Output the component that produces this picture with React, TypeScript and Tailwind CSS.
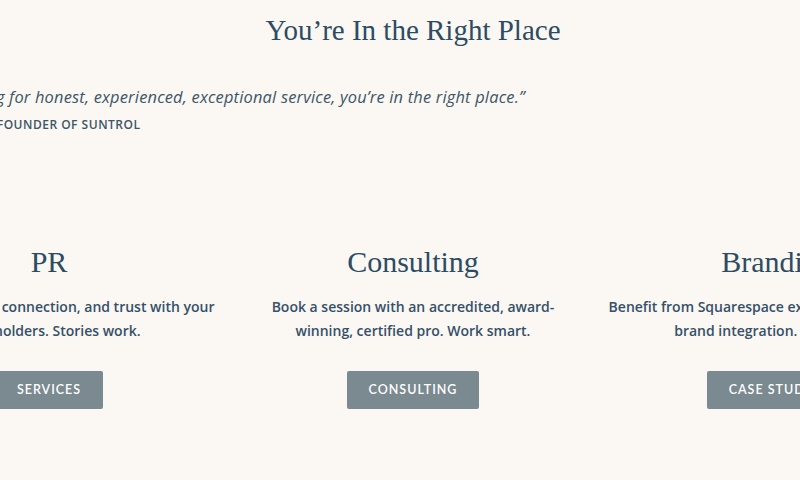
import React from "react";

const columns = [
  {
    title: "PR",
    lines: ["Build awareness, connection, and trust with your", "stakeholders. Stories work."],
    cta: "SERVICES",
  },
  {
    title: "Consulting",
    lines: ["Book a session with an accredited, award-", "winning, certified pro. Work smart."],
    cta: "CONSULTING",
  },
  {
    title: "Branding",
    lines: ["Benefit from Squarespace expertise and seamless", "brand integration. Look sharp."],
    cta: "CASE STUDIES",
  },
];

export default function App() {
  return (
    <div className="w-[800px] h-[480px] overflow-hidden bg-[#fbf7f2] text-[#2f4b5e]">
      <div className="w-[1092px] ml-[-133px] flex flex-col">
        <h1 className="pt-[13px] text-center text-[29px] leading-[34px] font-['Liberation_Serif',serif] text-[#2b4c63]">
          You’re In the Right Place
        </h1>

        <div className="pl-[14px] pt-[39px] font-['Open_Sans',sans-serif]">
          <p className="italic text-[16.4px] leading-[22px] tracking-[0.2px] text-[#3b5668]">
            “If you’re looking for honest, experienced, exceptional service, you’re in the right place.”
          </p>
          <p className="ml-[6px] mt-[9px] text-[12px] leading-[16px] font-semibold tracking-[0.5px] text-[#3b5668]">
            — LAUREN ELLIS, FOUNDER OF SUNTROL
          </p>
        </div>

        <div className="mt-[112px] grid grid-cols-3">
          {columns.map((c) => (
            <div key={c.title} className="flex flex-col items-center">
              <h2 className="text-[30px] leading-[34px] font-['Liberation_Serif',serif] text-[#2b4c63]">
                {c.title}
              </h2>
              <div className="mt-[16px] text-center text-[14px] leading-[24px] font-semibold font-['Open_Sans',sans-serif] text-[#34506a]">
                {c.lines.map((l) => (
                  <p key={l}>{l}</p>
                ))}
              </div>
              <button className="mt-[28px] h-[38px] px-[22px] rounded-[2px] bg-[#7b8990] text-white text-[12.5px] font-semibold tracking-[1px] font-['Lato',sans-serif]">
                {c.cta}
              </button>
            </div>
          ))}
        </div>
      </div>
    </div>
  );
}
